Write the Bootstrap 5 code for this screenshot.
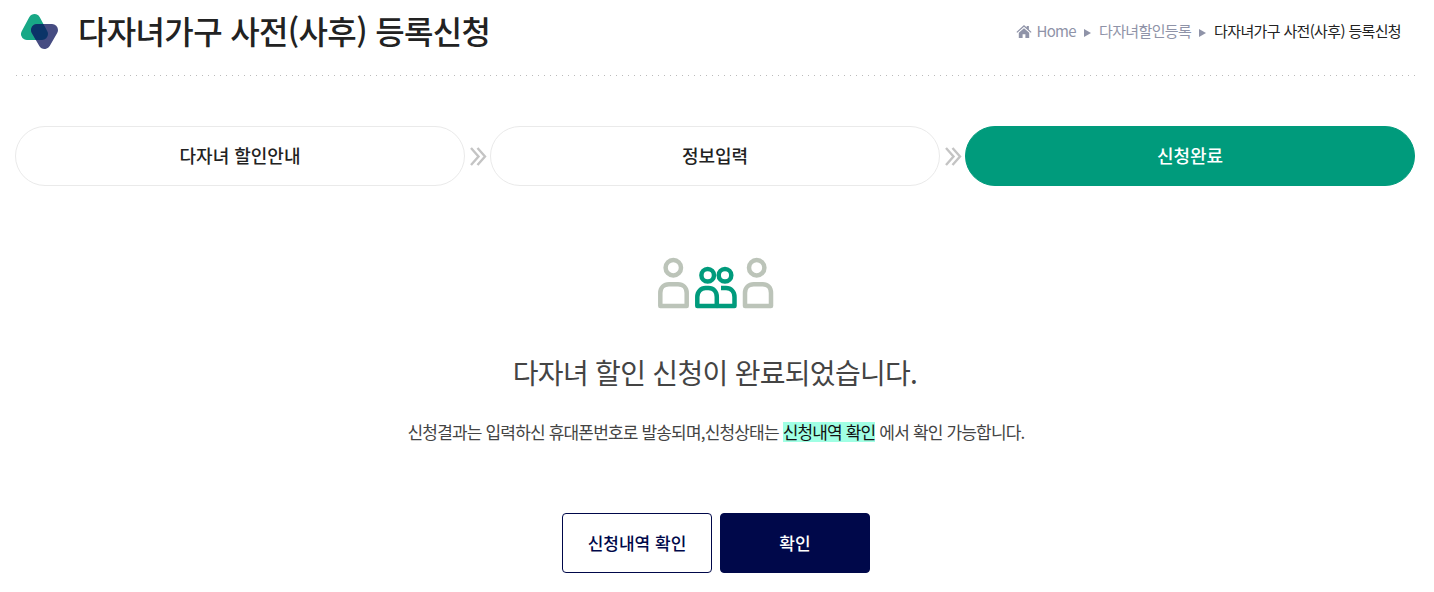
<!DOCTYPE html>
<html lang="ko">
<head>
    <meta charset="UTF-8">
    <meta name="viewport" content="width=device-width, initial-scale=1.0">
    <title>다자녀가구 사전(사후) 등록신청</title>
    <link rel="stylesheet" href="https://cdn.jsdelivr.net/npm/bootstrap@5.3.0/dist/css/bootstrap.min.css">
    <style>
        body { font-family: "Noto Sans CJK KR", "Noto Sans", sans-serif; color: #222; background: #fff; overflow: hidden; }
        .page-wrap { width: 1400px; margin-left: 15px; }
        .page-head { height: 76px; padding: 0 14px 13px 5px; background: linear-gradient(to right, #bbb 1px, transparent 1px) left 1px bottom / 6px 1px repeat-x; }
        .page-title { font-size: 32px; font-weight: 500; letter-spacing: -0.65px; color: #222; margin: 0 0 0 19px; padding-bottom: 4px; line-height: 1; }
        .crumbs { font-size: 15px; letter-spacing: -0.65px; color: #8f93a8; }
        .crumbs .now { color: #222; }
        .crumb-arrow { width: 0; height: 0; border-left: 7px solid #8f93a8; border-top: 4px solid transparent; border-bottom: 4px solid transparent; margin: 2px 8px 0; }
        .steps { margin-top: 50px; }
        .step-pill { width: 450px; height: 60px; padding-bottom: 2px; border: 1px solid #eaeaea; border-radius: 30px; font-size: 18px; font-weight: 500; color: #222; }
        .step-pill.on { background: #009b7c; border-color: #009b7c; color: #fff; }
        .step-gap { width: 25px; padding-left: 1px; }
        .done-icon { margin-top: 71px; height: 54px; padding-left: 1px; }
        .done-title { font-size: 28px; font-weight: 400; letter-spacing: -0.7px; color: #444; margin: 41px 0 0; line-height: 40px; }
        .done-text { font-size: 17px; letter-spacing: -0.83px; color: #444; margin: 28px 0 0; padding-left: 2px; line-height: 24px; }
        .done-text .hl { display: inline-block; line-height: 20px; background: #a0ffe4; color: #111; }
        .done-btns { margin-top: 69px; padding-left: 2px; gap: 8px; }
        .act-btn { width: 150px; height: 60px; font-size: 17px; font-weight: 500; letter-spacing: 0; border: 1px solid #00084a; border-radius: 4px; }
        .act-btn.line { background: #fff; color: #00084a; }
        .act-btn.fill { background: #00084a; color: #fff; }
    </style>
</head>
<body>
    <div class="page-wrap">
        <div class="page-head d-flex align-items-center justify-content-between">
            <div class="d-flex align-items-center">
                <svg width="39" height="38" viewBox="20 13 39 38">
                    <defs>
                        <mask id="logoMask" maskUnits="userSpaceOnUse" x="20" y="13" width="39" height="38">
                            <polygon points="34.5,20 27,34 42,34" fill="#fff" stroke="#fff" stroke-width="12" stroke-linejoin="round"/>
                        </mask>
                    </defs>
                    <polygon points="34.5,20 27,34 42,34" fill="#18a886" stroke="#18a886" stroke-width="12" stroke-linejoin="round"/>
                    <polygon points="37,30 52,30 44.5,43" fill="#464c82" stroke="#464c82" stroke-width="12" stroke-linejoin="round"/>
                    <polygon points="37,30 52,30 44.5,43" fill="#0b3468" stroke="#0b3468" stroke-width="12" stroke-linejoin="round" mask="url(#logoMask)"/>
                </svg>
                <h1 class="page-title">다자녀가구 사전(사후) 등록신청</h1>
            </div>
            <div class="crumbs d-flex align-items-center">
                <svg width="16" height="13" viewBox="0 0 14 12" class="me-1"><path d="M7 0 L9.5 2.3 V1 H11.5 V4.1 L14 6.4 L13.2 7.2 L7 1.6 L0.8 7.2 L0 6.4 Z M2.2 7.2 L7 2.9 L11.8 7.2 V12 H8.3 V8.5 H5.7 V12 H2.2 Z" fill="#8f93a8"/></svg>
                <span>Home</span>
                <span class="crumb-arrow"></span>
                <span>다자녀할인등록</span>
                <span class="crumb-arrow"></span>
                <span class="now">다자녀가구 사전(사후) 등록신청</span>
            </div>
        </div>

        <div class="steps d-flex align-items-center">
            <div class="step-pill d-flex align-items-center justify-content-center">다자녀 할인안내</div>
            <div class="step-gap d-flex justify-content-center">
                <svg width="17" height="19" viewBox="0 0 17 19" fill="none" stroke="#c4c4c4" stroke-width="2.4"><path d="M1 1 L8.5 9.5 L1 18"/><path d="M7.5 1 L15 9.5 L7.5 18"/></svg>
            </div>
            <div class="step-pill d-flex align-items-center justify-content-center">정보입력</div>
            <div class="step-gap d-flex justify-content-center">
                <svg width="17" height="19" viewBox="0 0 17 19" fill="none" stroke="#c4c4c4" stroke-width="2.4"><path d="M1 1 L8.5 9.5 L1 18"/><path d="M7.5 1 L15 9.5 L7.5 18"/></svg>
            </div>
            <div class="step-pill on d-flex align-items-center justify-content-center">신청완료</div>
        </div>

        <div class="text-center">
            <div class="done-icon">
                <svg width="120" height="54" viewBox="0 0 120 54" fill="none" stroke-width="4.5" stroke-linejoin="round">
                    <g stroke="#bcc4b9">
                        <circle cx="17.3" cy="10.7" r="7.7"/>
                        <path d="M4.3 49 V36 C4.3 30.5 8 27.3 13 27.3 H22 C27 27.3 30.7 30.5 30.7 36 V49 Z"/>
                        <circle cx="100.7" cy="10.7" r="7.7"/>
                        <path d="M89 49 V36 C89 30.5 92.7 27.3 97.7 27.3 H106.7 C111.7 27.3 115 30.5 115 36 V49 Z"/>
                    </g>
                    <g stroke="#009b7c">
                        <circle cx="51.7" cy="18.3" r="6.3"/>
                        <circle cx="69" cy="18.3" r="6.3"/>
                        <path d="M41.3 49 V40 C41.3 34.5 45 31 49.5 31 H52.5 C57.5 31 60.8 34.5 60.8 40 V49 Z"/>
                        <path d="M60.8 49 H78.5 V40 C78.5 34.5 75 31 70 31 H65"/>
                    </g>
                </svg>
            </div>
            <p class="done-title">다자녀 할인 신청이 완료되었습니다.</p>
            <p class="done-text">신청결과는 입력하신 휴대폰번호로 발송되며,신청상태는 <span class="hl">신청내역 확인</span> 에서 확인 가능합니다.</p>
            <div class="done-btns d-flex justify-content-center">
                <button type="button" class="btn act-btn line p-0">신청내역 확인</button>
                <button type="button" class="btn act-btn fill p-0">확인</button>
            </div>
        </div>
    </div>
    <script src="https://cdn.jsdelivr.net/npm/bootstrap@5.3.0/dist/js/bootstrap.bundle.min.js"></script>
</body>
</html>
